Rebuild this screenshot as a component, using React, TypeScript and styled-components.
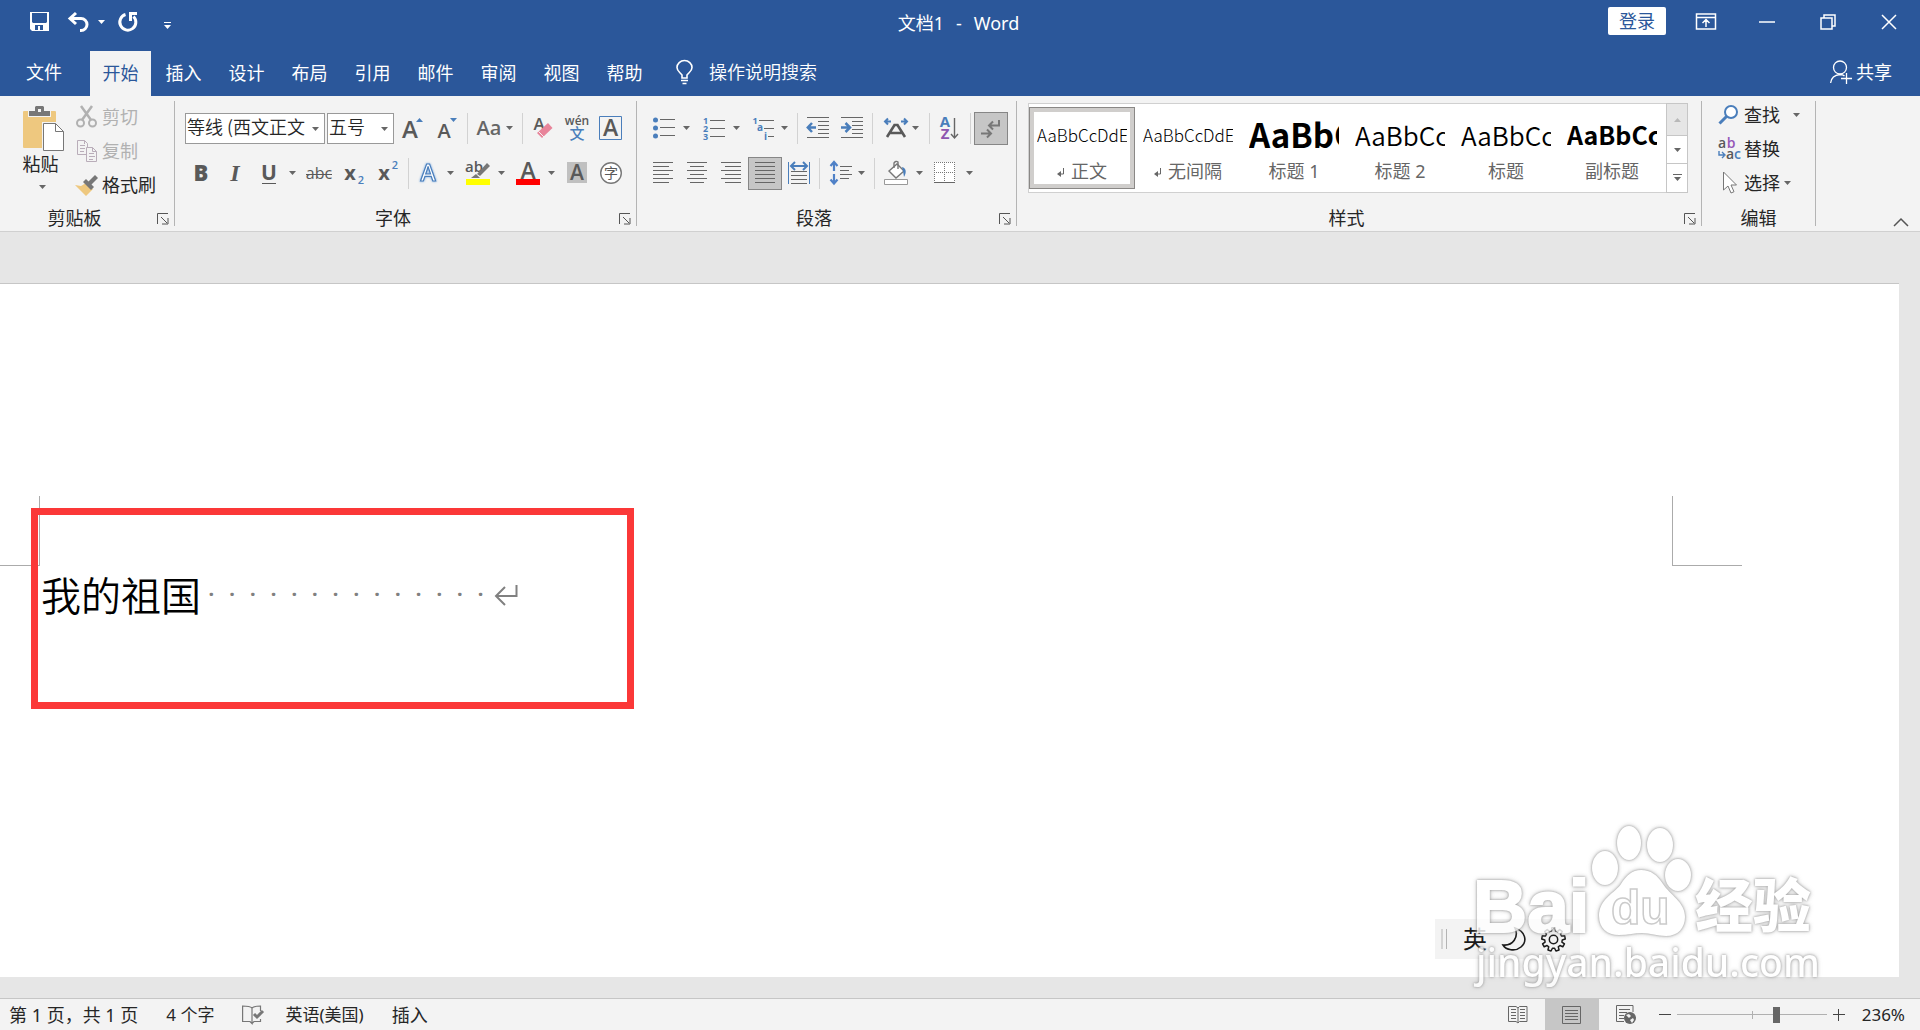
import React from "react";
import styled, { createGlobalStyle, css } from "styled-components";

const UI = `"Noto Sans", "Noto Sans CJK SC", sans-serif`;
const CJK = `"Noto Sans CJK SC", "Noto Sans", sans-serif`;
const BLUE = "#2b579a";
const INK = "#262626";
const GREY = "#666666";
const ACCENT = "#4a7ebb";

const GlobalStyle = createGlobalStyle`
  * { box-sizing: border-box; }
  html, body { margin: 0; }
  body { font-family: ${UI}; font-size: 18px; line-height: 24px; color: ${INK}; background: #e6e6e6; }
  button, input, select { font: inherit; color: inherit; margin: 0; }
  svg { overflow: visible; }
`;

const Shell = styled.div`
  display: flex;
  flex-direction: column;
  height: 100vh;
  overflow: hidden;
`;

const bareButton = css`
  display: flex;
  align-items: center;
  padding: 0;
  border: 0;
  background: transparent;
  white-space: nowrap;
`;

/* ---------- title bar ---------- */

const TitleBar = styled.header`
  display: grid;
  grid-template-columns: 1fr auto 1fr;
  height: 51px;
  background: ${BLUE};
  color: #fff;
`;
const QuickAccess = styled.div`
  display: flex;
  align-items: center;
  height: 44px;
  padding-left: 28px;
`;
const QuickButton = styled.button<{ $after?: number }>`
  ${bareButton}
  gap: 8px;
  height: 32px;
  margin-right: ${(p) => p.$after ?? 0}px;
  padding: 0 2px;
`;
const DocTitle = styled.h1`
  display: flex;
  gap: 12px;
  margin: 0;
  padding: 11px 3px 0 0;
  font-size: 18px;
  font-weight: 400;
`;
const WindowControls = styled.div`
  display: flex;
  justify-content: flex-end;
  align-items: flex-start;
  padding-right: 1px;
`;
const LoginButton = styled.button`
  ${bareButton}
  justify-content: center;
  width: 58px;
  height: 28px;
  margin: 7px 9px 0 0;
  border-radius: 2px;
  background: #fff;
  color: ${BLUE};
`;
const WindowButton = styled.button`
  ${bareButton}
  justify-content: center;
  width: 61px;
  height: 43px;
`;

/* ---------- tabs ---------- */

const TabBar = styled.nav`
  display: flex;
  align-items: stretch;
  gap: 2px;
  height: 45px;
  background: ${BLUE};
  color: #fff;
`;
const Tab = styled.button<{ $active?: boolean; $file?: boolean }>`
  ${bareButton}
  justify-content: center;
  width: ${(p) => (p.$file ? 88 : 61)}px;
  padding-bottom: ${(p) => (p.$file ? 3 : 1)}px;
  background: ${(p) => (p.$active ? "#f3f3f3" : "transparent")};
  color: ${(p) => (p.$active ? BLUE : "#fff")};
`;
const TellMe = styled.button`
  ${bareButton}
  gap: 15px;
  margin-left: 19px;
  padding-bottom: 3px;
  font-weight: 350;
`;
const ShareButton = styled.button`
  ${bareButton}
  gap: 4px;
  margin-left: auto;
  padding: 0 28px 3px 0;
`;

/* ---------- ribbon ---------- */

const Ribbon = styled.section`
  display: flex;
  height: 136px;
  padding: 5px 0 0;
  background: #f3f3f3;
  border-bottom: 1px solid #d0d0d0;
`;
const Group = styled.div<{ $width: number }>`
  display: flex;
  flex-direction: column;
  flex: none;
  width: ${(p) => p.$width}px;
  height: 125px;
  border-right: 1px solid #b4b4b4;
`;
const GroupFoot = styled.div`
  display: flex;
  align-items: center;
  height: 16px;
  margin-top: auto;
`;
const GroupLabel = styled.span<{ $wide: boolean }>`
  flex: 1;
  text-align: center;
  padding-right: ${(p) => (p.$wide ? 0 : 8)}px;
`;
const LauncherButton = styled.button`
  ${bareButton}
  height: 16px;
  padding: 2px 5px 0 0;
`;
const ToolRows = styled.div<{ $indent: number }>`
  display: flex;
  flex-direction: column;
  gap: 12px;
  padding: 11px 0 0 ${(p) => p.$indent}px;
`;
const ToolRow = styled.div`
  display: flex;
  align-items: center;
  height: 33px;
`;
const Tool = styled.button<{ $width?: number; $on?: boolean; $gap?: number }>`
  ${bareButton}
  justify-content: center;
  gap: ${(p) => p.$gap ?? 8}px;
  flex: none;
  width: ${(p) => p.$width ?? 34}px;
  height: 33px;
  padding-bottom: 1px;
  border: 1px solid ${(p) => (p.$on ? "#868686" : "transparent")};
  background: ${(p) => (p.$on ? "#c6c6c6" : "transparent")};
`;
const Separator = styled.span`
  flex: none;
  width: 1px;
  height: 31px;
  margin: 0 3px;
  background: #d2d2d2;
`;
const Combo = styled.label<{ $width: number }>`
  position: relative;
  display: block;
  width: ${(p) => p.$width}px;
  height: 31px;
  margin-right: 2px;
  background: #fff;

  select {
    appearance: none;
    display: block;
    width: 100%;
    height: 31px;
    padding: 0 16px 5px 1px;
    border: 1px solid #999;
    border-radius: 0;
    background: transparent;
    font-family: ${CJK};
    font-weight: 350;
    text-overflow: clip;
  }
  svg {
    position: absolute;
    right: 6px;
    top: 14px;
    pointer-events: none;
  }
`;

const ClipboardBody = styled.div`
  display: flex;
`;
const PasteButton = styled.button`
  ${bareButton}
  flex-direction: column;
  width: 51px;
  margin-left: 17px;
  padding-top: 5px;
`;
const PasteLabel = styled.span`
  margin: 0 0 9px;
  padding-right: 4px;
`;
const CommandList = styled.div`
  display: flex;
  flex-direction: column;
  gap: 6px;
`;
const Command = styled.button<{ $muted?: boolean }>`
  ${bareButton}
  gap: 4px;
  height: 28px;
  padding-left: 8px;
  color: ${(p) => (p.$muted ? "#b1b1b1" : INK)};
`;
const CommandLabel = styled.span<{ $space?: number }>`
  margin-right: ${(p) => p.$space ?? 0}px;
`;
const ClipboardList = styled(CommandList)`
  padding-top: 2px;
`;
const EditingList = styled(CommandList)`
  padding-left: 8px;
`;

/* ---------- styles gallery ---------- */

const GalleryWrap = styled.div`
  padding: 2px 0 0 11px;
`;
const Gallery = styled.div`
  display: flex;
  width: 660px;
  height: 90px;
  border: 1px solid #d0d0d0;
  background: #fff;
`;
const StyleItem = styled.button<{ $on?: boolean }>`
  ${bareButton}
  flex-direction: column;
  flex: none;
  width: 106px;
  height: 82px;
  margin-top: 3px;
  border: 1px solid ${(p) => (p.$on ? "#8a8886" : "transparent")};
  box-shadow: ${(p) => (p.$on ? "inset 0 0 0 4px #d0cecc" : "none")};
`;
const Preview = styled.span<{ $size: number; $weight: number }>`
  width: 90px;
  height: 43px;
  margin-top: 8px;
  overflow: hidden;
  text-align: left;
  font-family: ${CJK};
  font-size: ${(p) => p.$size}px;
  font-weight: ${(p) => p.$weight};
  line-height: 37px;
  color: #000;
`;
const StyleName = styled.span`
  display: flex;
  align-items: center;
  justify-content: center;
  gap: 6px;
  color: ${GREY};
`;
const GalleryScroll = styled.div`
  display: grid;
  grid-template-rows: 31px 28px 1fr;
  width: 22px;
  margin: -1px -1px -1px auto;
  border: 1px solid #c6c6c6;
`;
const ScrollButton = styled.button<{ $off?: boolean }>`
  ${bareButton}
  justify-content: center;
  background: ${(p) => (p.$off ? "#e6e6e6" : "#fff")};

  & + & {
    border-top: 1px solid #c6c6c6;
  }
`;
const CollapseButton = styled.button`
  ${bareButton}
  align-self: flex-end;
  margin: 0 11px 4px auto;
`;

/* ---------- document ---------- */

const Workspace = styled.main`
  position: relative;
  display: flex;
  flex: 1;
  min-height: 0;
  padding: 51px 21px 21px 0;
  background: #e6e6e6;
`;
const Page = styled.article`
  flex: 1;
  border-top: 1px solid #c6c6c6;
  background: #fff;
`;
const CropMarks = styled.div`
  display: flex;
  justify-content: space-between;
  padding: 212px 157px 0 0;
`;
const CropMark = styled.span<{ $side: "left" | "right" }>`
  width: ${(p) => (p.$side === "left" ? 40 : 70)}px;
  height: 70px;
  border-bottom: 1px solid #ababab;
  border-${(p) => (p.$side === "left" ? "right" : "left")}: 1px solid #ababab;
`;
const Line = styled.p`
  display: flex;
  align-items: center;
  margin: 0;
  padding-left: 41px;
  height: 56px;
  font-family: ${CJK};
  font-size: 40px;
  font-weight: 350;
  line-height: 56px;
  color: #000;
`;
const SpaceMarks = styled.span`
  display: grid;
  grid-template-columns: repeat(14, 1fr);
  width: 290px;
  margin-right: 3px;
  color: #808080;
  font-family: ${UI};
  font-size: 20px;
  font-weight: 700;
  text-align: center;
`;
const Highlight = styled.div`
  position: absolute;
  left: 31px;
  top: 276px;
  width: 603px;
  height: 201px;
  border: 7px solid #fb3838;
`;
const ImeBar = styled.div`
  position: absolute;
  right: 340px;
  bottom: 39px;
  display: flex;
  align-items: center;
  gap: 15px;
  width: 145px;
  height: 40px;
  padding-left: 6px;
  background: #f3f3f3;
  color: #1a1a1a;
  font-size: 24px;

  button {
    ${bareButton}
  }
`;
const Watermark = styled.svg`
  position: absolute;
  right: 96px;
  bottom: 3px;
  opacity: 0.82;
  filter: drop-shadow(0 0 1px #8c8c8c) drop-shadow(0 0 2px #b8b8b8);
  pointer-events: none;
`;

/* ---------- status bar ---------- */

const StatusBar = styled.footer`
  display: flex;
  align-items: stretch;
  height: 32px;
  padding-left: 9px;
  border-top: 1px solid #c6c6c6;
  background: #f3f3f3;
`;
const StatusButton = styled.button<{ $space?: number; $small?: boolean }>`
  ${bareButton}
  margin-right: ${(p) => p.$space ?? 28}px;
  font-size: ${(p) => (p.$small ? 17 : 18)}px;
`;
const ViewButton = styled.button<{ $on?: boolean }>`
  ${bareButton}
  justify-content: center;
  width: 54px;
  background: ${(p) => (p.$on ? "#c6c6c6" : "transparent")};
`;
const StatusRight = styled.div`
  display: flex;
  align-items: stretch;
  margin-left: auto;
`;
const ZoomStep = styled.button`
  ${bareButton}
`;
const ZoomSlider = styled.input`
  appearance: none;
  align-self: center;
  width: 150px;
  height: 16px;
  margin: 0 6px;
  background:
    linear-gradient(#b0b0b0, #b0b0b0) center / 100% 1px no-repeat,
    linear-gradient(#b0b0b0, #b0b0b0) center / 1px 8px no-repeat;

  &::-webkit-slider-thumb {
    appearance: none;
    width: 7px;
    height: 16px;
    background: ${GREY};
  }
`;
const ZoomValue = styled.button`
  ${bareButton}
  justify-content: flex-end;
  width: 60px;
  margin-right: 15px;
  font-size: 17px;
`;

/* ---------- icons ---------- */

const Svg = ({ w, h, children }: { w: number; h: number; children: React.ReactNode }) => (
  <svg width={w} height={h} viewBox={`0 0 ${w} ${h}`} fill="none" aria-hidden="true">
    {children}
  </svg>
);

const Caret = ({ color = GREY, up = false }: { color?: string; up?: boolean }) => (
  <Svg w={7} h={4}>
    <path d={up ? "M0 4h7L3.500 0z" : "M0 0h7L3.500 4z"} fill={color} />
  </Svg>
);

const Letter = ({ x, y, size, fill = "#595959", weight = 600, style, font = "Open Sans, sans-serif", children }: any) => (
  <text x={x} y={y} fontSize={size} fill={fill} fontWeight={weight} fontStyle={style} fontFamily={font} textAnchor="middle">
    {children}
  </text>
);

const Lines = ({ rows, color = GREY }: { rows: number[][]; color?: string }) => (
  <path d={rows.map(([x, y, w]) => `M${x} ${y}.5h${w}`).join("")} stroke={color} />
);

const SaveIcon = () => (
  <Svg w={20} h={20}>
    <path fillRule="evenodd" d="M0 0h19v19H2l-2-2zM2 1v9l1 1h13l1-1V1zM5 13v5h3v-4h2v4h3v-5z" fill="#fff" />
  </Svg>
);
const UndoIcon = () => (
  <Svg w={22} h={20}>
    <path d="M8 1L2 6.500L8 12M2.500 6.500H13a6 6 0 0 1 0 12h-1" stroke="#fff" strokeWidth="3" />
  </Svg>
);
const RedoIcon = () => (
  <Svg w={20} h={20}>
    <path d="M7.500 2.500A8 8 0 1 0 15.500 4.500" stroke="#fff" strokeWidth="3" />
    <path d="M11 1.500h8M12.500 2v7" stroke="#fff" strokeWidth="3" />
  </Svg>
);
const CustomizeIcon = () => (
  <Svg w={8} h={14}>
    <path d="M0 7.500h7" stroke="#fff" />
    <path d="M0 10h7L3.500 14z" fill="#fff" />
  </Svg>
);
const RibbonOptionsIcon = () => (
  <Svg w={20} h={17}>
    <path d="M.5 1h19v15H.5zM.5 4.500h19M10 14V7M6.500 10L10 6.500l3.500 3.500" stroke="#fff" strokeWidth="1.500" />
  </Svg>
);
const MinimizeIcon = () => (
  <Svg w={16} h={16}><path d="M0 8h16" stroke="#fff" strokeWidth="1.500" /></Svg>
);
const RestoreIcon = () => (
  <Svg w={16} h={16}><path d="M1 4h11v11H1zM4 4V1h11v11h-3" stroke="#fff" strokeWidth="1.500" /></Svg>
);
const CloseIcon = () => (
  <Svg w={16} h={16}><path d="M1 1l14 14M15 1L1 15" stroke="#fff" strokeWidth="1.500" /></Svg>
);
const BulbIcon = () => (
  <Svg w={18} h={25}>
    <path d="M6 18v-3C3.500 12 1 11 1 7.500a7.500 7 0 0 1 15 0C16 11 13.500 12 11 15v3z" stroke="#fff" strokeWidth="1.600" />
    <path d="M5 20.500h7M6.500 23.500h4" stroke="#fff" strokeWidth="1.600" />
  </Svg>
);
const PersonIcon = () => (
  <Svg w={22} h={24}>
    <circle cx="10" cy="7.500" r="6.500" stroke="#fff" strokeWidth="1.300" />
    <path d="M.6 23c.6-5 4-8 9.400-8.500 2 0 3.500.5 4.500 1.500M11 18.500h11M16.500 13v11" stroke="#fff" strokeWidth="1.300" />
  </Svg>
);

const PasteIcon = () => (
  <Svg w={42} h={46}>
    <path d="M2 5h31a1 1 0 0 1 1 1v35a1 1 0 0 1-1 1H2a1 1 0 0 1-1-1V6a1 1 0 0 1 1-1z" fill="#eec87f" />
    <path d="M6 4h23v7H6z" fill="#f3f3f3" />
    <path fillRule="evenodd" d="M7 5h6V1l1-1h7l1 1v4h6v5H7zM16 3h3v3h-3z" fill="#777" />
    <path d="M20 16h14l8 8v22H20z" fill="#f3f3f3" />
    <path d="M21.500 17.500h12l8 8v19h-20z" fill="#fff" stroke="#777" />
    <path d="M33.500 17.500v8h8" stroke="#777" />
  </Svg>
);
const CutIcon = () => (
  <Svg w={22} h={22}>
    <path d="M5 0l10 14M16 0L6 14" stroke="#b1b1b1" strokeWidth="2.500" />
    <circle cx="4.500" cy="17" r="3.500" stroke="#b1b1b1" strokeWidth="2" />
    <circle cx="16.500" cy="17" r="3.500" stroke="#b1b1b1" strokeWidth="2" />
  </Svg>
);
const CopyIcon = () => (
  <Svg w={22} h={22}>
    <path d="M1.500.5h7l3 3v11h-10zM8.500.5v3.500M4 5.500h5M4 8.500h5M4 11.500h4" stroke="#b9adb9" />
    <path d="M10.500 7.500h6l4 4v10h-10z" fill="#f3f3f3" stroke="#b9adb9" />
    <path d="M16.500 7.500v4h4M13 13.500h5M13 16.500h6M13 19.500h4" stroke="#b9adb9" />
  </Svg>
);
const PainterIcon = () => (
  <Svg w={22} h={21}>
    <path d="M-1 10l6 1 5-3 7 6-7 7z" fill="#eec87f" />
    <path d="M7 7l3-3 8 8-3 3z" fill="#777" />
    <path d="M12 7l7-7 3 3-7 7z" fill="#777" />
  </Svg>
);

const GrowIcon = ({ down = false }: { down?: boolean }) => (
  <Svg w={22} h={24}>
    <Letter x={8} y={22} size={down ? 20 : 24} weight={600}>A</Letter>
    <path d={down ? "M14 2h7l-3.500 4z" : "M14 6h7L17.500 2z"} fill={ACCENT} />
  </Svg>
);
const CaseIcon = () => (
  <Svg w={25} h={24}><Letter x={12} y={19} size={20} weight={600} fill={GREY}>Aa</Letter></Svg>
);
const EraserIcon = () => (
  <Svg w={20} h={24}>
    <Letter x={6} y={14} size={17}>A</Letter>
    <path d="M4 17L15 7l4.500 5L9 22z" fill="#e8849a" />
    <path d="M5.500 15.500l5.500 5.500" stroke="#f3f3f3" />
  </Svg>
);
const PinyinIcon = () => (
  <Svg w={22} h={26}>
    <Letter x={11} y={10} size={12} weight={600}>wén</Letter>
    <Letter x={11} y={24} size={15} fill={ACCENT} weight={500} font="Noto Sans CJK SC, sans-serif">文</Letter>
  </Svg>
);
const BorderAIcon = () => (
  <Svg w={24} h={24}>
    <path d="M.5.5h22v23H.5z" fill="#f3f3f3" stroke={ACCENT} />
    <Letter x={11.5} y={20} size={23}>A</Letter>
  </Svg>
);
const BoldIcon = () => (
  <Svg w={16} h={24}><Letter x={7} y={20} size={22} weight={800}>B</Letter></Svg>
);
const ItalicIcon = () => (
  <Svg w={16} h={24}><Letter x={7} y={20} size={24} weight={700} style="italic" font="Liberation Serif, serif">I</Letter></Svg>
);
const UnderlineIcon = () => (
  <Svg w={16} h={24}><Letter x={8} y={19} size={21} weight={700}>U</Letter><path d="M1 22.500h14" stroke="#595959" /></Svg>
);
const StrikeIcon = () => (
  <Svg w={26} h={24}><Letter x={12} y={18} size={16} weight={400}>abc</Letter><path d="M-1 13.500h26" stroke="#595959" /></Svg>
);
const ScriptIcon = ({ sup = false }: { sup?: boolean }) => (
  <Svg w={20} h={26}>
    <Letter x={6} y={20} size={20} weight={700}>x</Letter>
    <Letter x={17} y={sup ? 9 : 24} size={11} weight={600} fill={ACCENT}>2</Letter>
  </Svg>
);
const EffectIcon = () => (
  <Svg w={20} h={24}>
    <text x="9" y="20" fontSize="23" fontWeight="600" fontFamily="Open Sans, sans-serif" textAnchor="middle" fill="#fff" stroke={ACCENT} strokeWidth="1.200" style={{ filter: "drop-shadow(0 0 1px #6fa4e0)" }}>A</text>
  </Svg>
);
const MarkerIcon = () => (
  <Svg w={24} h={26}>
    <Letter x={8} y={12} size={15} weight={600}>ab</Letter>
    <path d="M11 14L21 3l3 3-10 10z" fill="#777" />
    <path d="M5 18l5-4 4 4z" fill="#777" />
    <path d="M0 19h24v6H0z" fill="#ff0" />
  </Svg>
);
const FontColorIcon = () => (
  <Svg w={24} h={26}>
    <Letter x={12} y={19} size={23}>A</Letter>
    <path d="M0 19h24v6H0z" fill="red" />
  </Svg>
);
const ShadeAIcon = () => (
  <Svg w={20} h={22}><path d="M0 0h20v21H0z" fill="#c0c0c0" /><Letter x={10} y={18} size={21}>A</Letter></Svg>
);
const CircleIcon = () => (
  <Svg w={22} h={24}>
    <circle cx="11" cy="12" r="10.300" fill="#fff" stroke="#777" strokeWidth="1.400" />
    <Letter x={11} y={17} size={14} weight={400} font="Noto Sans CJK SC, sans-serif">字</Letter>
  </Svg>
);

const BulletsIcon = () => (
  <Svg w={22} h={22}>
    {[3, 11, 19].map((y) => <circle key={y} cx="2.500" cy={y} r="2.500" fill={ACCENT} />)}
    <Lines rows={[[7, 2, 15], [7, 10, 15], [7, 18, 15]]} />
  </Svg>
);
const NumbersIcon = () => (
  <Svg w={22} h={24}>
    {[1, 2, 3].map((n) => <Letter key={n} x={2.500} y={n * 8} size={9} fill={ACCENT} weight={700}>{n}</Letter>)}
    <Lines rows={[[7, 4, 15], [7, 12, 15], [7, 20, 15]]} />
  </Svg>
);
const MultiIcon = () => (
  <Svg w={22} h={24}>
    <Letter x={2} y={8} size={9} fill={ACCENT} weight={700}>1</Letter>
    <Letter x={7} y={15} size={10} fill={ACCENT} weight={700}>a</Letter>
    <Letter x={12.500} y={24} size={10} fill={ACCENT} weight={700}>i</Letter>
    <Lines rows={[[6, 4, 15], [11, 12, 10], [15, 20, 6]]} />
  </Svg>
);
const IndentIcon = ({ right = false }: { right?: boolean }) => (
  <Svg w={22} h={22}>
    <Lines rows={[[0, 0, 22], [11, 4, 11], [11, 8, 11], [11, 12, 11], [11, 16, 11], [0, 20, 22]]} />
    <path d={right ? "M0 10.500h8M4.500 6l4.500 4.500L4.500 15" : "M1 10.500h8M5 6L.8 10.500 5 15"} stroke={ACCENT} strokeWidth="2.500" />
  </Svg>
);
const ScaleIcon = () => (
  <Svg w={24} h={22}>
    <path d="M1 4.500h6M4 1.500l-3 3 3 3M23 4.500h-6M20 1.500l3 3-3 3" stroke={ACCENT} strokeWidth="2" />
    <path d="M3 20L10.500 8h3L21 20M6 16h12" stroke="#595959" strokeWidth="2.600" />
  </Svg>
);
const SortIcon = () => (
  <Svg w={20} h={24}>
    <Letter x={5} y={11} size={15} fill={ACCENT} weight={700}>A</Letter>
    <Letter x={5} y={23} size={15} fill="#8e56b0" weight={700}>Z</Letter>
    <path d="M14.500 2v20M11 18l3.500 4 3.500-4" stroke={GREY} strokeWidth="1.400" />
  </Svg>
);
const MarksIcon = () => (
  <Svg w={20} h={22}>
    <path d="M18 3v5.500H9M12 4.500l-4 4 4 4M0 16.500h9M6 12.500l4 4-4 4" stroke="#777" strokeWidth="2" />
  </Svg>
);
const AlignIcon = ({ kind }: { kind: "left" | "center" | "right" | "full" }) => {
  const x = { left: 0, center: 3, right: 4, full: 0 }[kind];
  const w = kind === "full" ? 20 : kind === "center" ? 14 : 16;
  return (
    <Svg w={20} h={22}>
      <Lines rows={[[0, 0, 20], [x, 4, w], [0, 8, 20], [x, 12, w], [0, 16, 20], [x, 20, w]]} />
    </Svg>
  );
};
const DistributeIcon = () => (
  <Svg w={22} h={24}>
    <path d="M.5 1v22M21.500 1v22" stroke={ACCENT} />
    <path d="M3 5h16M7 1L3 5l4 4M15 1l4 4-4 4" stroke={ACCENT} strokeWidth="2" />
    <Lines rows={[[3, 10, 16], [3, 14, 16], [3, 18, 16], [3, 22, 16]]} />
  </Svg>
);
const SpacingIcon = () => (
  <Svg w={22} h={24}>
    <path d="M4 1v9M.5 5L4 1l3.500 4M4 13v9M.5 18.500L4 22.500l3.500-4" stroke="#4f81c7" strokeWidth="2.200" />
    <Lines rows={[[10, 5, 12], [10, 9, 9], [10, 13, 12], [10, 17, 9]]} />
  </Svg>
);
const BucketIcon = () => (
  <Svg w={24} h={26}>
    <path d="M5 11L13 4l7 7-8 7z" fill="#fff" stroke="#777" strokeWidth="1.400" />
    <path d="M10 8V3a2.500 2.500 0 0 1 4-1v7" stroke="#777" strokeWidth="1.400" />
    <path d="M18 7c4 1 5 5 2 10l-1-6z" fill={ACCENT} />
    <path d="M.5 19.500h23v5H.5z" fill="#fff" stroke="#999" />
  </Svg>
);
const BordersIcon = () => (
  <Svg w={22} h={22}>
    <path d="M0 0h21v21H0z" fill="#fff" />
    <path d="M0 .5h21M.5 0v20M20.500 0v20M10.500 0v20M0 10.500h21" stroke="#777" strokeDasharray="1 1" />
    <path d="M0 20.500h21" stroke={GREY} />
  </Svg>
);
const LauncherIcon = () => (
  <Svg w={12} h={12}>
    <path d="M.5 11V.5H11M4 4l6 6M11 5v6H5" stroke="#555" />
  </Svg>
);
const ReturnGlyph = () => (
  <Svg w={8} h={10}>
    <path d="M6.500 2v6H2" stroke={GREY} />
    <path d="M0 8l4-3v6z" fill={GREY} />
  </Svg>
);
const SearchIcon = () => (
  <Svg w={22} h={20}>
    <circle cx="13" cy="7" r="6" fill="#fff" stroke={ACCENT} strokeWidth="2" />
    <path d="M8.500 11.500L1.500 18.500" stroke={ACCENT} strokeWidth="3" />
  </Svg>
);
const ReplaceIcon = () => (
  <Svg w={22} h={24}>
    <Letter x={4} y={11} size={14}>a</Letter>
    <Letter x={13} y={11} size={14} fill="#9558b8">b</Letter>
    <Letter x={12} y={22} size={14}>a</Letter>
    <Letter x={19.500} y={22} size={14} fill={ACCENT}>c</Letter>
    <path d="M1 14v4h5M4 15l3 3-3 3" stroke={ACCENT} strokeWidth="1.400" />
  </Svg>
);
const PointerIcon = () => (
  <Svg w={22} h={24}>
    <path d="M5.500 1v18l4.500-4 3 7 3-1.300-3-6.700h5.500z" fill="#fff" stroke="#777" />
  </Svg>
);
const ProofIcon = () => (
  <Svg w={22} h={20}>
    <path d="M10 3C8 1 6 1 .6 1v15.500H8l2 2V3c2-2 4-2 8.500-2v5M10 18.500l2-2h6.500V14" stroke="#777" strokeWidth="1.200" />
    <path d="M12 9l3 3 6-6" stroke="#777" strokeWidth="3" />
  </Svg>
);
const ReadIcon = () => (
  <Svg w={20} h={18}>
    <path d="M.5.5H8l2 1.500 1.500-1.500H19v15h-7.500L10 17l-2-1.500H.5zM10 2v14" stroke={GREY} />
    <Lines rows={[[3, 3, 5], [3, 6, 5], [3, 9, 5], [3, 12, 5], [12, 3, 5], [12, 6, 5], [12, 9, 5], [12, 12, 5]]} />
  </Svg>
);
const PrintIcon = () => (
  <Svg w={20} h={18}>
    <path d="M.5.5H18.500v17H.5z" stroke={GREY} />
    <Lines rows={[[3, 4, 13], [3, 7, 13], [3, 10, 13], [3, 13, 13]]} />
  </Svg>
);
const WebIcon = () => (
  <Svg w={20} h={20}>
    <path d="M8 16.500H.5V.5H17V7" stroke={GREY} />
    <Lines rows={[[3, 4, 11], [3, 7, 8], [3, 10, 5], [3, 13, 5]]} />
    <circle cx="14" cy="13" r="6" fill={GREY} />
    <path d="M10 10l3-1 2 2-2 2zM14 15l3-2 1 2-2 3z" fill="#f3f3f3" />
  </Svg>
);
const MoonIcon = () => (
  <Svg w={24} h={24}>
    <path d="M13 1c10 3 13 13 6 19-6 5-15 3-18-2 10 1 16-8 12-17z" stroke="#1a1a1a" strokeWidth="1.600" />
  </Svg>
);
const GearIcon = () => {
  const pts: string[] = [];
  for (let i = 0; i < 9; i++) {
    [[-13, 8.8], [-8, 11.8], [8, 11.8], [13, 8.8]].forEach(([deg, r]) => {
      const a = ((i * 40 + deg - 90) * Math.PI) / 180;
      pts.push(`${(12.5 + r * Math.cos(a)).toFixed(2)} ${(12.5 + r * Math.sin(a)).toFixed(2)}`);
    });
  }
  return (
    <Svg w={25} h={25}>
      <path d={`M${pts.join("L")}z`} stroke="#1a1a1a" strokeWidth="1.500" strokeLinejoin="round" />
      <circle cx="12.500" cy="12.500" r="4.200" stroke="#1a1a1a" strokeWidth="1.500" />
    </Svg>
  );
};

/* ---------- composition ---------- */

const TABS = ["插入", "设计", "布局", "引用", "邮件", "审阅", "视图", "帮助"];

const STYLES = [
  { name: "正文", sample: "AaBbCcDdE", size: 17, weight: 300, mark: true },
  { name: "无间隔", sample: "AaBbCcDdE", size: 17, weight: 300, mark: true },
  { name: "标题 1", sample: "AaBbC", size: 33, weight: 700 },
  { name: "标题 2", sample: "AaBbCc", size: 26, weight: 350 },
  { name: "标题", sample: "AaBbCc", size: 26, weight: 350 },
  { name: "副标题", sample: "AaBbCc", size: 25, weight: 700 },
];

const Foot = ({ label, launcher = true }: { label: string; launcher?: boolean }) => (
  <GroupFoot>
    <GroupLabel $wide={!launcher}>{label}</GroupLabel>
    {launcher && <LauncherButton aria-label={`${label}选项`}><LauncherIcon /></LauncherButton>}
  </GroupFoot>
);

const Split = ({ label, width = 50, gap, children }: { label: string; width?: number; gap?: number; children: React.ReactNode }) => (
  <Tool $width={width} $gap={gap} aria-label={label}>
    {children}
    <Caret />
  </Tool>
);

export default function App() {
  return (
    <Shell>
      <GlobalStyle />
      <TitleBar>
        <QuickAccess>
          <QuickButton $after={14} aria-label="保存"><SaveIcon /></QuickButton>
          <QuickButton $after={9} aria-label="撤消"><UndoIcon /><Caret color="#fff" /></QuickButton>
          <QuickButton $after={22} aria-label="重复"><RedoIcon /></QuickButton>
          <QuickButton aria-label="自定义快速访问工具栏"><CustomizeIcon /></QuickButton>
        </QuickAccess>
        <DocTitle><span>文档1</span><span>-</span><span>Word</span></DocTitle>
        <WindowControls>
          <LoginButton>登录</LoginButton>
          <WindowButton aria-label="功能区显示选项"><RibbonOptionsIcon /></WindowButton>
          <WindowButton aria-label="最小化"><MinimizeIcon /></WindowButton>
          <WindowButton aria-label="还原"><RestoreIcon /></WindowButton>
          <WindowButton aria-label="关闭"><CloseIcon /></WindowButton>
        </WindowControls>
      </TitleBar>

      <TabBar>
        <Tab $file>文件</Tab>
        <Tab $active>开始</Tab>
        {TABS.map((t) => <Tab key={t}>{t}</Tab>)}
        <TellMe><BulbIcon />操作说明搜索</TellMe>
        <ShareButton><PersonIcon />共享</ShareButton>
      </TabBar>

      <Ribbon>
        <Group $width={175}>
          <ClipboardBody>
            <PasteButton>
              <PasteIcon />
              <PasteLabel>粘贴</PasteLabel>
              <Caret />
            </PasteButton>
            <ClipboardList>
              <Command $muted><CutIcon />剪切</Command>
              <Command $muted><CopyIcon />复制</Command>
              <Command><PainterIcon />格式刷</Command>
            </ClipboardList>
          </ClipboardBody>
          <Foot label="剪贴板" />
        </Group>

        <Group $width={462}>
          <ToolRows $indent={10}>
            <ToolRow>
              <Combo $width={140}>
                <select aria-label="字体"><option>等线 (西文正文</option></select>
                <Caret />
              </Combo>
              <Combo $width={67}>
                <select aria-label="字号"><option>五号</option></select>
                <Caret />
              </Combo>
              <Tool aria-label="增大字号"><GrowIcon /></Tool>
              <Tool aria-label="减小字号"><GrowIcon down /></Tool>
              <Separator />
              <Split label="更改大小写" width={48} gap={4}><CaseIcon /></Split>
              <Separator />
              <Tool aria-label="清除所有格式"><EraserIcon /></Tool>
              <Tool aria-label="拼音指南"><PinyinIcon /></Tool>
              <Tool aria-label="字符边框"><BorderAIcon /></Tool>
            </ToolRow>
            <ToolRow>
              <Tool aria-label="加粗"><BoldIcon /></Tool>
              <Tool aria-label="倾斜"><ItalicIcon /></Tool>
              <Split label="下划线" gap={12}><UnderlineIcon /></Split>
              <Tool aria-label="删除线"><StrikeIcon /></Tool>
              <Tool aria-label="下标"><ScriptIcon /></Tool>
              <Tool aria-label="上标"><ScriptIcon sup /></Tool>
              <Separator />
              <Split label="文本效果" width={48}><EffectIcon /></Split>
              <Split label="突出显示颜色"><MarkerIcon /></Split>
              <Split label="字体颜色"><FontColorIcon /></Split>
              <Tool aria-label="字符底纹"><ShadeAIcon /></Tool>
              <Tool aria-label="带圈字符"><CircleIcon /></Tool>
            </ToolRow>
          </ToolRows>
          <Foot label="字体" />
        </Group>

        <Group $width={380}>
          <ToolRows $indent={9}>
            <ToolRow>
              <Split label="项目符号"><BulletsIcon /></Split>
              <Split label="编号"><NumbersIcon /></Split>
              <Split label="多级列表" width={48} gap={6}><MultiIcon /></Split>
              <Separator />
              <Tool aria-label="减少缩进量"><IndentIcon /></Tool>
              <Tool aria-label="增加缩进量"><IndentIcon right /></Tool>
              <Separator />
              <Split label="中文版式" width={50} gap={4}><ScaleIcon /></Split>
              <Separator />
              <Tool aria-label="排序"><SortIcon /></Tool>
              <Separator />
              <Tool $on aria-label="显示编辑标记"><MarksIcon /></Tool>
            </ToolRow>
            <ToolRow>
              <Tool aria-label="左对齐"><AlignIcon kind="left" /></Tool>
              <Tool aria-label="居中"><AlignIcon kind="center" /></Tool>
              <Tool aria-label="右对齐"><AlignIcon kind="right" /></Tool>
              <Tool $on aria-label="两端对齐"><AlignIcon kind="full" /></Tool>
              <Tool aria-label="分散对齐"><DistributeIcon /></Tool>
              <Separator />
              <Split label="行和段落间距" width={48} gap={6}><SpacingIcon /></Split>
              <Separator />
              <Split label="底纹"><BucketIcon /></Split>
              <Split label="边框" gap={10}><BordersIcon /></Split>
            </ToolRow>
          </ToolRows>
          <Foot label="段落" />
        </Group>

        <Group $width={685}>
          <GalleryWrap>
            <Gallery>
              {STYLES.map((s, i) => (
                <StyleItem key={s.name} $on={i === 0}>
                  <Preview $size={s.size} $weight={s.weight}>{s.sample}</Preview>
                  <StyleName>{s.mark && <ReturnGlyph />}{s.name}</StyleName>
                </StyleItem>
              ))}
              <GalleryScroll>
                <ScrollButton $off aria-label="上一行"><Caret up color="#b8b8b8" /></ScrollButton>
                <ScrollButton aria-label="下一行"><Caret /></ScrollButton>
                <ScrollButton aria-label="其他">
                  <Svg w={9} h={8}><path d="M0 .5h9" stroke={GREY} /><path d="M1 3h7L4.500 7z" fill={GREY} /></Svg>
                </ScrollButton>
              </GalleryScroll>
            </Gallery>
          </GalleryWrap>
          <Foot label="样式" />
        </Group>

        <Group $width={114}>
          <EditingList>
            <Command><SearchIcon /><CommandLabel $space={9}>查找</CommandLabel><Caret /></Command>
            <Command><ReplaceIcon />替换</Command>
            <Command><PointerIcon /><CommandLabel>选择</CommandLabel><Caret /></Command>
          </EditingList>
          <Foot label="编辑" launcher={false} />
        </Group>
        <CollapseButton aria-label="折叠功能区">
          <Svg w={16} h={10}><path d="M1 9l7-7 7 7" stroke="#555" strokeWidth="1.500" /></Svg>
        </CollapseButton>
      </Ribbon>

      <Workspace>
        <Page>
          <CropMarks>
            <CropMark $side="left" />
            <CropMark $side="right" />
          </CropMarks>
          <Line>
            我的祖国
            <SpaceMarks>
              {Array.from({ length: 14 }, (_, i) => <span key={i}>·</span>)}
            </SpaceMarks>
            <Svg w={24} h={22}><path d="M22.500 2v11H2M11 4l-9 9 9 9" stroke="#808080" strokeWidth="2" /></Svg>
          </Line>
        </Page>
        <Highlight />
        <ImeBar>
          <Svg w={7} h={20}><path d="M1 0v20M5.500 0v20" stroke="#b4b4b4" /></Svg>
          <button>英</button>
          <button aria-label="半角"><MoonIcon /></button>
          <button aria-label="设置"><GearIcon /></button>
        </ImeBar>
        <Watermark width="356" height="180" viewBox="0 0 356 180" fill="#fff" aria-hidden="true">
          <text x="5" y="117" fontSize="75" fontWeight="700" fontFamily="Liberation Sans, sans-serif" stroke="#fff" strokeWidth="2">Bai</text>
          <ellipse cx="137" cy="53" rx="13" ry="17" />
          <ellipse cx="161" cy="28" rx="12" ry="17" />
          <ellipse cx="192" cy="30" rx="13" ry="17" />
          <ellipse cx="210" cy="60" rx="13" ry="16" />
          <path fillRule="evenodd" d="M173 55c-9 0-15 6-20 14-6 9-22 15-22 32 0 12 8 19 20 19 9 0 16-2 23-2 8 0 15 3 24 3 12 0 19-8 19-19 0-15-15-22-22-33-6-9-12-14-22-14z" />
          <text x="143" y="109" fontSize="48" fontWeight="700" fontFamily="Liberation Sans, sans-serif" stroke="#c0c0c0" strokeWidth="1.500">du</text>
          <text x="227" y="112" fontSize="58" fontWeight="900" fontFamily="Noto Sans CJK SC, sans-serif">经验</text>
          <text x="8" y="162" fontSize="39" fontWeight="500" fontFamily="Noto Sans, sans-serif">jingyan.baidu.com</text>
        </Watermark>
      </Workspace>

      <StatusBar>
        <StatusButton>第 1 页，共 1 页</StatusButton>
        <StatusButton $small>4 个字</StatusButton>
        <StatusButton $space={21} aria-label="校对"><ProofIcon /></StatusButton>
        <StatusButton $small>英语(美国)</StatusButton>
        <StatusButton>插入</StatusButton>
        <StatusRight>
          <ViewButton aria-label="阅读视图"><ReadIcon /></ViewButton>
          <ViewButton $on aria-label="页面视图"><PrintIcon /></ViewButton>
          <ViewButton aria-label="Web 版式视图"><WebIcon /></ViewButton>
          <ZoomStep aria-label="缩小"><Svg w={18} h={12}><path d="M6 5.500h12" stroke="#444" /></Svg></ZoomStep>
          <ZoomSlider type="range" min={0} max={100} defaultValue={67} aria-label="显示比例" />
          <ZoomStep aria-label="放大"><Svg w={12} h={12}><path d="M0 5.500h12M5.500 0v12" stroke="#444" /></Svg></ZoomStep>
          <ZoomValue>236%</ZoomValue>
        </StatusRight>
      </StatusBar>
    </Shell>
  );
}
